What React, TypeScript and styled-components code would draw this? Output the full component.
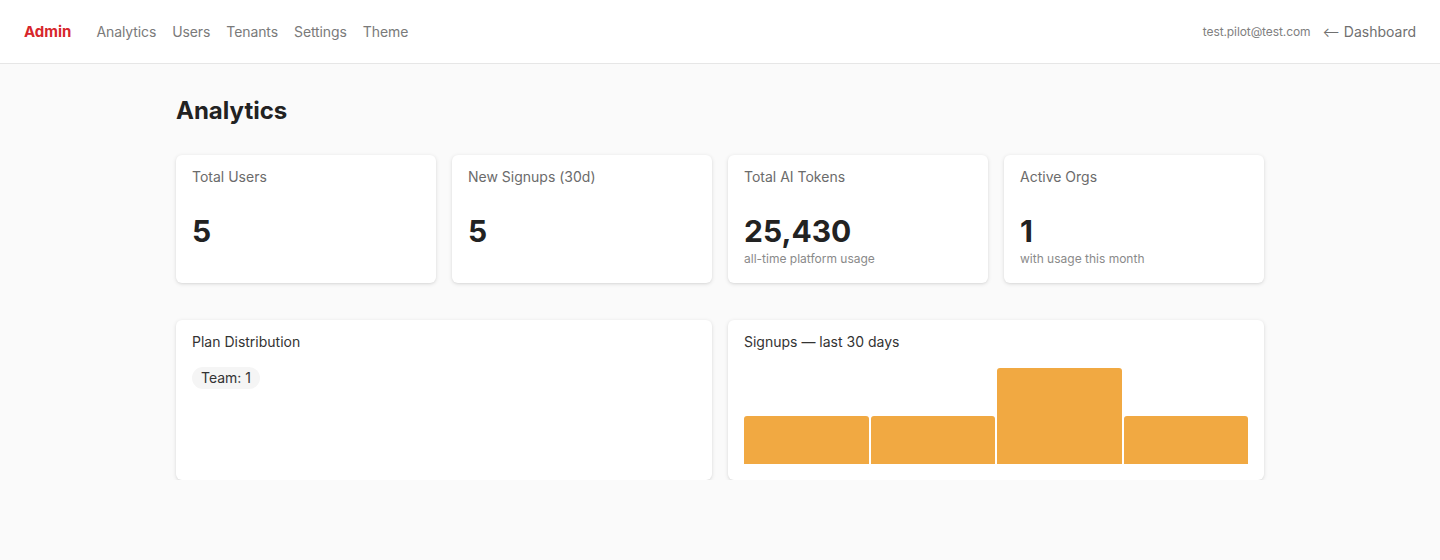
import React from 'react';
import styled, { createGlobalStyle } from 'styled-components';

const GlobalStyle = createGlobalStyle`
  html, body {
    margin: 0;
    padding: 0;
    background: #fafafa;
    font-family: Inter, "Noto Sans", "Liberation Sans", sans-serif;
    color: #222;
  }
  * {
    box-sizing: border-box;
  }
`;

const navLinks = ['Analytics', 'Users', 'Tenants', 'Settings', 'Theme'];

const stats = [
  { label: 'Total Users', value: '5' },
  { label: 'New Signups (30d)', value: '5' },
  { label: 'Total AI Tokens', value: '25,430', note: 'all-time platform usage' },
  { label: 'Active Orgs', value: '1', note: 'with usage this month' },
];

const signups = [1, 1, 2, 1];

const App: React.FC = () => {
  const max = Math.max(...signups);
  return (
    <>
      <GlobalStyle />
      <TopBar>
        <NavLeft>
          <Brand>Admin</Brand>
          <NavList>
            {navLinks.map((link) => (
              <NavLink key={link}>{link}</NavLink>
            ))}
          </NavList>
        </NavLeft>
        <NavRight>
          <UserEmail>test.pilot@test.com</UserEmail>
          <BackLink>
            <Arrow>⟵</Arrow> Dashboard
          </BackLink>
        </NavRight>
      </TopBar>
      <Main>
        <PageTitle>Analytics</PageTitle>
        <StatGrid>
          {stats.map((s) => (
            <Card key={s.label}>
              <StatLabel>{s.label}</StatLabel>
              <StatValue>{s.value}</StatValue>
              {s.note && <StatNote>{s.note}</StatNote>}
            </Card>
          ))}
        </StatGrid>
        <PanelGrid>
          <Card>
            <PanelTitle>Plan Distribution</PanelTitle>
            <PillRow>
              <Pill>Team: 1</Pill>
            </PillRow>
          </Card>
          <Card>
            <PanelTitle>Signups — last 30 days</PanelTitle>
            <Chart>
              {signups.map((n, i) => (
                <Bar key={i} style={{ height: `${(n / max) * 100}%` }} />
              ))}
            </Chart>
          </Card>
        </PanelGrid>
      </Main>
    </>
  );
};

export default App;

const TopBar = styled.header`
  height: 64px;
  padding: 0 24px;
  display: flex;
  align-items: center;
  justify-content: space-between;
  background: #fff;
  border-bottom: 1px solid #e6e6e6;
`;

const NavLeft = styled.div`
  display: flex;
  align-items: center;
  gap: 25px;
`;

const Brand = styled.span`
  font-size: 15px;
  font-weight: 700;
  color: #d7262b;
`;

const NavList = styled.nav`
  display: flex;
  gap: 16px;
`;

const NavLink = styled.a`
  font-size: 14px;
  letter-spacing: -0.1px;
  color: #7a7a7a;
  cursor: pointer;
`;

const NavRight = styled.div`
  display: flex;
  align-items: center;
  gap: 12px;
`;

const UserEmail = styled.span`
  font-size: 12px;
  letter-spacing: -0.1px;
  color: #808080;
`;

const BackLink = styled.a`
  font-size: 14px;
  color: #707070;
  cursor: pointer;
`;

const Arrow = styled.span`
  font-size: 13px;
`;

const Main = styled.main`
  width: 1088px;
  margin: 0 auto;
  padding-top: 32px;
`;

const PageTitle = styled.h1`
  margin: 0 0 29px;
  font-size: 24px;
  line-height: 30px;
  font-weight: 700;
  color: #222;
`;

const StatGrid = styled.div`
  display: grid;
  grid-template-columns: repeat(4, 1fr);
  gap: 16px;
`;

const PanelGrid = styled.div`
  display: grid;
  grid-template-columns: repeat(2, 1fr);
  gap: 16px;
  margin-top: 37px;
`;

const Card = styled.div`
  background: #fff;
  border-radius: 6px;
  box-shadow: 0 1px 4px rgba(0, 0, 0, 0.12), 0 1px 2px rgba(0, 0, 0, 0.04);
  padding: 12px 16px 16px;
  display: flex;
  flex-direction: column;
`;

const StatLabel = styled.div`
  font-size: 14px;
  line-height: 20px;
  color: #6b6b6b;
`;

const StatValue = styled.div`
  margin-top: 24px;
  font-size: 30px;
  line-height: 40px;
  font-weight: 700;
  color: #222;
`;

const StatNote = styled.div`
  font-size: 12px;
  line-height: 16px;
  color: #8a8a8a;
`;

const PanelTitle = styled.div`
  font-size: 14px;
  line-height: 20px;
  color: #333;
`;

const PillRow = styled.div`
  display: flex;
  gap: 8px;
  margin-top: 15px;
`;

const Pill = styled.span`
  font-size: 14px;
  line-height: 18px;
  padding: 2px 9px;
  border-radius: 11px;
  background: #f5f5f5;
  color: #333;
`;

const Chart = styled.div`
  margin-top: 16px;
  height: 96px;
  display: flex;
  align-items: flex-end;
  gap: 2px;
`;

const Bar = styled.div`
  flex: 1;
  background: #f1a942;
  border-radius: 3px 3px 0 0;
`;
